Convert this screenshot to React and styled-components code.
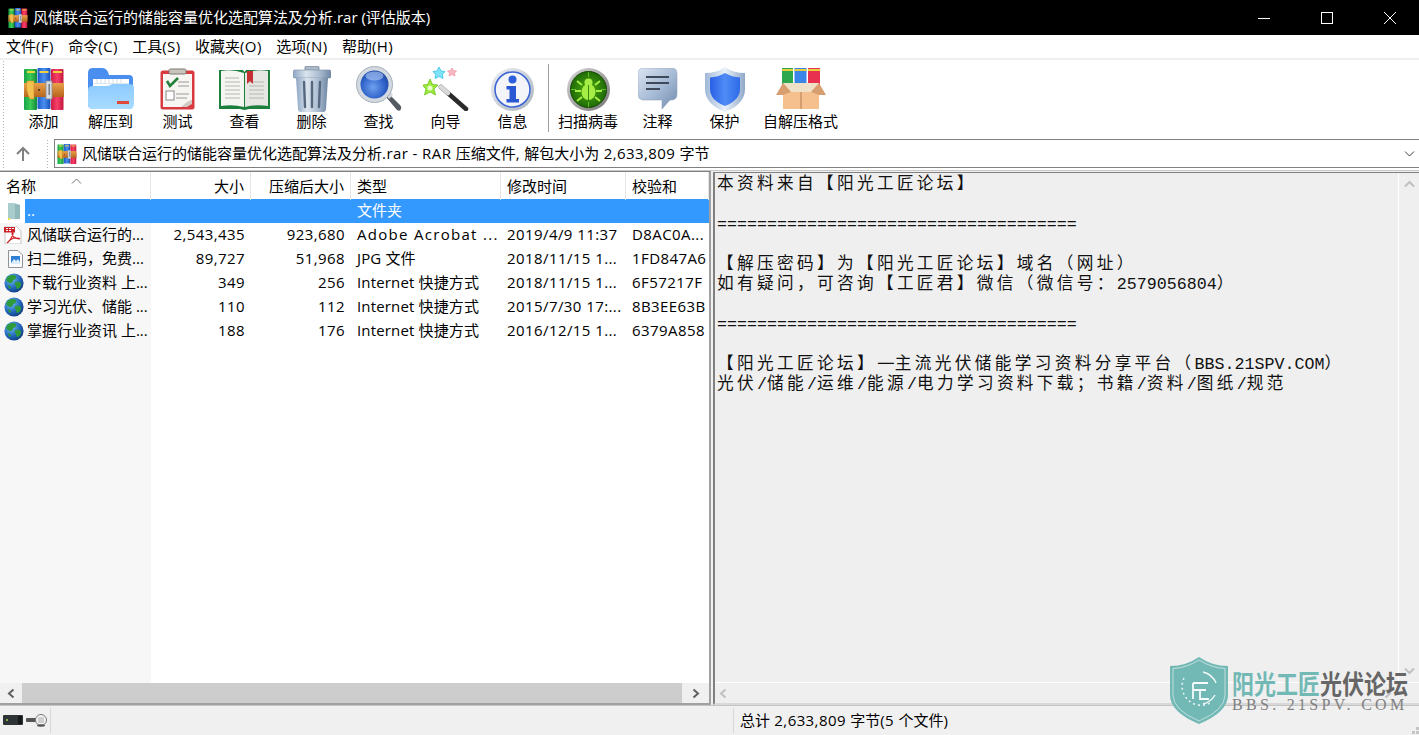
import React from "react";
import { styled, createGlobalStyle } from "styled-components";

const UI_FONT = `"Open Sans", "Noto Sans CJK SC", sans-serif`;

const Global = createGlobalStyle`
  html, body { margin: 0; padding: 0; background: #fff; overflow: hidden; }
  * { box-sizing: border-box; }
`;

/* ---------- icons ---------- */

const RarIcon = ({ w = 40, h = 42 }) => (
  <svg width={w} height={h} viewBox="0 0 40 42">
    <defs>
      <linearGradient id="rg" x1="0" x2="1"><stop offset="0" stopColor="#17a34a" /><stop offset=".5" stopColor="#3ccb55" /><stop offset="1" stopColor="#128a3c" /></linearGradient>
      <linearGradient id="rb" x1="0" x2="1"><stop offset="0" stopColor="#1c59c9" /><stop offset=".5" stopColor="#4a90ef" /><stop offset="1" stopColor="#1a4eb8" /></linearGradient>
      <linearGradient id="rr" x1="0" x2="1"><stop offset="0" stopColor="#d11a45" /><stop offset=".5" stopColor="#f6416a" /><stop offset="1" stopColor="#c2163c" /></linearGradient>
      <linearGradient id="ro" x1="0" x2="0" y1="0" y2="1"><stop offset="0" stopColor="#e9a04a" /><stop offset="1" stopColor="#b8661c" /></linearGradient>
    </defs>
    <rect x="0" y="1" width="13" height="41" rx="1" fill="url(#rg)" />
    <rect x="13.5" y="0" width="13" height="41" rx="1" fill="url(#rb)" />
    <rect x="27" y="1" width="12.5" height="41" rx="1" fill="url(#rr)" />
    <rect x="3" y="3" width="8" height="2" fill="#e8d83c" />
    <rect x="15.5" y="3" width="9" height="2" fill="#f0d040" />
    <rect x="29" y="3" width="9" height="2" fill="#f0d040" />
    <rect x="0" y="15" width="40" height="14" fill="url(#ro)" />
    <path d="M3 13 h7 v18 h-4 q-5 -9 -3 -18z" fill="#f2c14e" stroke="#c98a28" strokeWidth=".6" />
    <rect x="22" y="13" width="6" height="18" fill="#d8dce2" stroke="#8b8f96" strokeWidth=".8" />
    <rect x="24.5" y="16" width="1.4" height="11" fill="#6e7278" />
    <circle cx="15" cy="22" r="1" fill="#3a2a10" />
  </svg>
);

const FolderIcon = () => (
  <svg width="46" height="42" viewBox="0 0 46 42">
    <defs>
      <linearGradient id="fb" x1="0" x2="0" y1="0" y2="1"><stop offset="0" stopColor="#8ccaff" /><stop offset="1" stopColor="#a8dcff" /></linearGradient>
    </defs>
    <path d="M2 40 Q0 39 0 36 V5 Q0 0 5 0 H14 Q18 0 20 4 L21 7 H41 Q45 7 45 11 V36 Q45 41 41 41 H5z" fill="#4a8fef" />
    <rect x="5" y="11" width="36" height="14" fill="#fff" />
    <path d="M9 11v4M13 11v4M17 11v4M21 11v4M25 11v4M29 11v4M33 11v4" stroke="#c9d6e4" strokeWidth=".8" />
    <rect x="5" y="15" width="36" height="1" fill="#dfe7ee" />
    <path d="M0 36 V22 Q0 18 5 18 H18 Q22 18 24 16 H41 Q46 16 46 20 V36 Q46 41 41 41 H5 Q0 41 0 36z" fill="url(#fb)" />
    <rect x="29" y="33" width="12" height="3" fill="#e0483a" />
  </svg>
);

const ClipboardIcon = () => (
  <svg width="36" height="42" viewBox="0 0 36 42">
    <rect x=".5" y="2.5" width="34" height="39" rx="2.5" fill="#d83a3f" />
    <path d="M3 6 H32 V32 Q26 35 22 39 H3z" fill="#f7f5f2" />
    <path d="M22 39 Q25 34 32 32 V36 L27 39z" fill="#cfcac4" />
    <rect x="9" y="1" width="17" height="5" rx="1.5" fill="#c9c4bd" stroke="#7d7872" strokeWidth="1" />
    <path d="M7 13 L10 18 L18 10" fill="none" stroke="#23803a" strokeWidth="2.6" />
    <path d="M18 14h11M18 18h11M16 26h13M16 30h11" stroke="#9a9a9a" strokeWidth="1" />
    <rect x="6" y="23" width="8" height="9" fill="#fff" stroke="#8a8a8a" strokeWidth="1" />
  </svg>
);

const BookIcon = () => (
  <svg width="51" height="42" viewBox="0 0 51 42">
    <path d="M0 2 H24 L25.5 4 L27 2 H51 V41 H30 L25.5 42 L21 41 H0z" fill="#1d7f3c" />
    <path d="M2 3 Q14 1 25 5 V39 Q14 36 2 38z" fill="#f5f5f2" />
    <path d="M49 3 Q37 1 26 5 V39 Q37 36 49 38z" fill="#e6e6e3" />
    <path d="M6 10 H20M6 14 H21M6 18 H21M6 22 H21M6 26 H21M6 30 H21M30 14 H45M30 18 H45M30 22 H45M30 26 H45M30 30 H45" stroke="#b5b5b2" strokeWidth="1.2" />
    <path d="M28 3 H34 V16 L31 13 L28 16z" fill="#c53034" />
  </svg>
);

const TrashIcon = () => (
  <svg width="38" height="46" viewBox="0 0 38 46">
    <defs>
      <linearGradient id="tb" x1="0" x2="1"><stop offset="0" stopColor="#8ea6c4" /><stop offset=".35" stopColor="#dbe4ee" /><stop offset=".7" stopColor="#a9bbd0" /><stop offset="1" stopColor="#6f86a3" /></linearGradient>
    </defs>
    <rect x="12" y="0" width="14" height="5" rx="1.5" fill="#aab8c8" stroke="#6f7f92" strokeWidth=".8" />
    <rect x="0" y="4" width="38" height="8" rx="1.5" fill="url(#tb)" stroke="#7d8da0" strokeWidth=".6" />
    <path d="M3 12 H35 L33 43 Q33 46 30 46 H8 Q5 46 5 43z" fill="url(#tb)" />
    <path d="M11 16 L12 41 M19 16 V41 M27 16 L26 41" stroke="#56687e" strokeWidth="2.4" strokeLinecap="round" />
  </svg>
);

const SearchIcon = () => (
  <svg width="46" height="46" viewBox="0 0 46 46">
    <defs>
      <radialGradient id="sl" cx=".45" cy=".6" r=".7"><stop offset="0" stopColor="#6ea0ef" /><stop offset=".6" stopColor="#2f62c8" /><stop offset="1" stopColor="#183c94" /></radialGradient>
    </defs>
    <path d="M30 31 L41 44 Q44 46 45 43 Q46 41 44 39 L33 28z" fill="#555b62" />
    <path d="M31 30 L35 26 L37 29 L33 33z" fill="#d7dade" />
    <circle cx="18.5" cy="18.5" r="18" fill="#d3d9e0" stroke="#a7afb9" strokeWidth="1" />
    <circle cx="18.5" cy="18.5" r="14" fill="url(#sl)" />
    <ellipse cx="18.5" cy="10" rx="9" ry="4.5" fill="#a9c5f3" opacity=".65" />
  </svg>
);

const WandIcon = () => (
  <svg width="46" height="44" viewBox="0 0 46 44">
    <path d="M18 20 L43 42" stroke="#2b2b2b" strokeWidth="4.5" strokeLinecap="round" />
    <path d="M18 20 L25 26" stroke="#d8d8d8" strokeWidth="4.5" strokeLinecap="round" />
    <path d="M7 12 L9.5 17.5 L15 18 L11 22 L12.5 28 L7 25 L1.5 28 L3 22 L-1 18 L4.5 17.5z" fill="#9be83a" stroke="#6cc41e" strokeWidth=".8" />
    <circle cx="7" cy="21" r="2.6" fill="#e6ffc9" />
    <path d="M16 0 L18 4 L22 4.5 L19.5 7.5 L20 11.5 L16 9.5 L12 11.5 L12.5 7.5 L10 4.5 L14 4z" fill="#7fe3f7" stroke="#38c1e8" strokeWidth=".8" />
    <path d="M29 1 L30.5 3.5 L33.5 4 L31.5 6 L32 9 L29 7.5 L26 9 L26.5 6 L24.5 4 L27.5 3.5z" fill="#f7b5c0" stroke="#ee8a9c" strokeWidth=".6" />
  </svg>
);

const InfoIcon = () => (
  <svg width="43" height="43" viewBox="0 0 43 43">
    <defs>
      <linearGradient id="ir" x1="0" y1="0" x2="1" y2="1"><stop offset="0" stopColor="#eef1f5" /><stop offset="1" stopColor="#a9b2bd" /></linearGradient>
    </defs>
    <circle cx="21.5" cy="21.5" r="21.5" fill="url(#ir)" />
    <circle cx="21.5" cy="21.5" r="17.5" fill="#f3f5f8" stroke="#3f66d6" strokeWidth="1.6" />
    <circle cx="21.5" cy="11.5" r="4" fill="#2f60dc" />
    <path d="M15.5 18 H25 V31 H28 V34.5 H15.5 V31 H18.5 V21.5 H15.5z" fill="#2a58d2" />
  </svg>
);

const BugIcon = () => (
  <svg width="43" height="43" viewBox="0 0 43 43">
    <defs>
      <linearGradient id="bg" x1="0" y1="0" x2="1" y2="1"><stop offset="0" stopColor="#d8d8d8" /><stop offset="1" stopColor="#747474" /></linearGradient>
      <radialGradient id="bd"><stop offset="0" stopColor="#4fae10" /><stop offset="1" stopColor="#1f6a06" /></radialGradient>
    </defs>
    <circle cx="21.5" cy="21.5" r="21.5" fill="url(#bg)" />
    <circle cx="21.5" cy="21.5" r="18" fill="url(#bd)" stroke="#174c05" strokeWidth="1" />
    <path d="M21.5 4v5M21.5 34v5M4 21.5h5M34 21.5h5" stroke="#5fc020" strokeWidth="1" />
    <circle cx="21.5" cy="14.5" r="4" fill="#a6ee45" />
    <ellipse cx="21.5" cy="24" rx="7" ry="8" fill="#a6ee45" />
    <path d="M21.5 17v15" stroke="#3a8a0a" strokeWidth="1" />
    <path d="M15 17 L10 13 M28 17 L33 13 M14 23 H8 M29 23 H35 M15 29 L10 33 M28 29 L33 33" stroke="#a6ee45" strokeWidth="2" />
  </svg>
);

const CommentIcon = () => (
  <svg width="40" height="42" viewBox="0 0 40 42">
    <defs>
      <linearGradient id="cb" x1="0" y1="0" x2="1" y2="1"><stop offset="0" stopColor="#dbe5f1" /><stop offset=".55" stopColor="#a3b8d3" /><stop offset="1" stopColor="#7189ac" /></linearGradient>
    </defs>
    <path d="M6 0 H34 Q39 0 39 6 V26 Q39 32 33 32 H32 L24 41 L24 32 H6 Q0 32 0 26 V6 Q0 0 6 0z" fill="url(#cb)" stroke="#93a5bc" strokeWidth=".6" />
    <path d="M8 9 H31M8 15 H31M8 21 H22" stroke="#3e4a5c" strokeWidth="1.8" />
  </svg>
);

const ShieldIcon = () => (
  <svg width="40" height="45" viewBox="0 0 40 45">
    <defs>
      <linearGradient id="sh" x1="0" x2="1"><stop offset="0" stopColor="#2a5fe6" /><stop offset=".5" stopColor="#4f8cf7" /><stop offset="1" stopColor="#2f6ae8" /></linearGradient>
      <linearGradient id="sr" x1="0" x2="1"><stop offset="0" stopColor="#9fb8d8" /><stop offset=".5" stopColor="#eaf1f8" /><stop offset="1" stopColor="#8fa8c8" /></linearGradient>
    </defs>
    <path d="M20 0 Q28 6 40 6 V22 Q40 37 20 45 Q0 37 0 22 V6 Q12 6 20 0z" fill="url(#sr)" />
    <path d="M20 6 Q27 10 35 10.5 V22 Q35 33 20 39 Q5 33 5 22 V10.5 Q13 10 20 6z" fill="url(#sh)" />
  </svg>
);

const BoxIcon = () => (
  <svg width="52" height="42" viewBox="0 0 52 42">
    <rect x="7" y="0" width="11" height="20" fill="#2ea84e" />
    <rect x="19.5" y="0" width="12" height="20" fill="#3a86e8" />
    <rect x="33" y="0" width="12" height="20" fill="#e8304f" />
    <path d="M7 2h11M19.5 2h12M33 2h12" stroke="#e8cf3c" strokeWidth="2" />
    <path d="M8 15 H44 V41 H8z" fill="#f6c08e" />
    <path d="M8 15 H44 L36 24 H16z" fill="#efe1c8" />
    <path d="M26 24 V41" stroke="#b57d52" strokeWidth="1" />
    <path d="M1 27 L8 15 L16 24 L8 27z M51 27 L44 15 L36 24 L44 27z" fill="#d89e70" />
  </svg>
);

const PdfIcon = () => (
  <svg width="18" height="18" viewBox="0 0 18 18">
    <path d="M1 0 H12 L17 5 V18 H1z" fill="#fff" stroke="#b9b9b9" strokeWidth=".8" />
    <rect x="0" y="1" width="11" height="5.5" fill="#c8242a" />
    <path d="M2 2.5h2M5 2.5h2M8 2.5h2M2 4.5h2M5 4.5h2" stroke="#fff" strokeWidth="1" />
    <path d="M3 17 Q7 14 9 8 Q9 5 8 7 Q8 12 15 13 Q17 12 12 12 Q7 12 3 17z" fill="none" stroke="#d0252b" strokeWidth="1.2" />
  </svg>
);

const JpgIcon = () => (
  <svg width="15" height="18" viewBox="0 0 15 18">
    <path d="M.5 .5 H10 L14.5 5 V17.5 H.5z" fill="#fbfbfb" stroke="#8f949a" />
    <rect x="3" y="6" width="9" height="8" fill="#2e7fd3" />
    <path d="M3 13 L6 9 L8 11 L10 9 L12 12 V14 H3z" fill="#dcecfa" />
  </svg>
);

const GlobeIcon = () => (
  <svg width="20" height="20" viewBox="0 0 20 20">
    <defs>
      <radialGradient id="gl" cx=".35" cy=".3" r=".85"><stop offset="0" stopColor="#6ec0f2" /><stop offset=".6" stopColor="#1d5fb4" /><stop offset="1" stopColor="#0c2e6a" /></radialGradient>
    </defs>
    <circle cx="10" cy="10" r="9.6" fill="url(#gl)" />
    <path d="M5 3 Q9 1 12 3 Q13 6 9 7 Q9 10 6 10 Q3 9 2 7 Q3 4 5 3z M11 9 Q15 8 17 10 Q18 13 14 16 Q12 16 12 13 Q10 11 11 9z M4 12 Q7 13 7 15 L6 16 Q4 15 4 12z" fill="#2f9a3a" />
  </svg>
);

const ParentIcon = () => (
  <svg width="13" height="17" viewBox="0 0 13 17">
    <path d="M0 0 H6 L12 2 V16 H0z" fill="#a9cccd" />
    <path d="M7 1 L12 2 V16 H7z" fill="#8fb9bb" />
    <rect x="0" y="15" width="2" height="2" fill="#e6e24c" />
  </svg>
);

const KeyIcon = () => (
  <svg width="21" height="14" viewBox="0 0 21 14">
    <rect x="0" y="5" width="11" height="4" rx="1" fill="#555" />
    <circle cx="15" cy="7" r="5.5" fill="#f4f4f4" stroke="#777" />
    <path d="M12 5h6M12 7h6M12 9h6" stroke="#999" strokeWidth=".8" />
    <ellipse cx="15" cy="12.5" rx="4" ry="1.2" fill="#555" />
  </svg>
);

const LockPill = () => (
  <svg width="20" height="10" viewBox="0 0 20 10">
    <rect width="20" height="10" rx="1" fill="#2e3436" />
    <rect x="15" y="1" width="4" height="8" fill="#16191a" />
    <circle cx="4" cy="5" r="1" fill="#8fd84a" />
  </svg>
);

const GripIcon = () => (
  <svg width="11" height="11" viewBox="0 0 11 11">
    <path d="M8 0h3v3h-3z M4 4h3v3h-3z M8 4h3v3h-3z M0 8h3v3h-3z M4 8h3v3h-3z M8 8h3v3h-3z" fill="#c4c4c4" />
  </svg>
);

const Chevron = ({ dir = "left", color = "#606060", size = 11, stroke = 2 }) => {
  const paths = {
    left: "M7.5 1.5 L3 5.5 L7.5 9.5",
    right: "M3.5 1.5 L8 5.5 L3.5 9.5",
    up: "M1 7.5 L5.5 3 L10 7.5",
    down: "M1 3.5 L5.5 8 L10 3.5",
  };
  return (
    <svg width={size} height={size} viewBox="0 0 11 11">
      <path d={paths[dir]} fill="none" stroke={color} strokeWidth={stroke} />
    </svg>
  );
};

const ShieldLogo = () => (
  <svg width="58" height="67" viewBox="0 0 58 67">
    <path d="M29 0 Q42 9 58 9 V38 Q58 55 29 67 Q0 55 0 38 V9 Q16 9 29 0z" fill="#72b9b6" />
    <path d="M29 3 Q42 11 55 11.500 V38 Q55 53 29 64 Q3 53 3 38 V11.500 Q16 11 29 3z" fill="none" stroke="#d4e8e6" strokeWidth=".8" />
    <path d="M14 21 A19 19 0 0 0 40 46" fill="none" stroke="#e6f3f2" strokeWidth="1.6" strokeDasharray="2 3" />
    <path d="M33 15 A19 19 0 0 1 46 26 M45 38 A19 19 0 0 1 33 47" fill="none" stroke="#f2f9f8" strokeWidth="1.4" />
    <path d="M23 26 H38 M23 26 V42 M23 33 H36 M30 33 V42 H39" fill="none" stroke="#f6fbfb" strokeWidth="1.8" />
  </svg>
);

/* ---------- window chrome ---------- */

const Window = styled.div`
  position: relative;
  width: 1419px;
  height: 735px;
  display: flex;
  flex-direction: column;
  overflow: hidden;
  background: #fff;
  font-family: ${UI_FONT};
  font-size: 15px;
  color: #000;
`;

const TitleBar = styled.div`
  height: 35px;
  flex: none;
  background: #000;
  color: #fff;
  display: flex;
  align-items: center;
  padding-left: 8px;
  gap: 5px;
`;

const TitleText = styled.div`
  flex: 1;
  line-height: 35px;
  white-space: nowrap;
`;

const WindowButton = styled.div`
  width: 58px;
  height: 35px;
  display: flex;
  align-items: center;
  justify-content: center;
`;

const MenuBar = styled.div`
  height: 25px;
  flex: none;
  display: flex;
  gap: 14.4px;
  padding: 0 0 2px 6px;
  align-items: center;
  border-bottom: 2px solid #f0f0f0;
  white-space: nowrap;
`;

const Toolbar = styled.div`
  height: 79px;
  flex: none;
  display: flex;
  padding-left: 10px;
  background-image: radial-gradient(circle, #b5b5b5 .8px, transparent 1px);
  background-size: 3px 3px;
  background-repeat: repeat-y;
  background-position: 2px 0;
`;

const ToolButton = styled.div`
  width: ${(p) => p.$w}px;
  flex: none;
  display: flex;
  flex-direction: column;
  align-items: center;
  white-space: nowrap;
`;

const ToolIcon = styled.div`
  height: 50px;
  margin-top: 4px;
  display: flex;
  align-items: center;
  justify-content: center;
`;

const ToolLabel = styled.div`
  line-height: 20px;
  margin-top: -3px;
`;

const ToolDivider = styled.div`
  width: 1px;
  height: 68px;
  margin: 4px 3px 0 2px;
  background: #a0a0a0;
  flex: none;
`;

const AddressRow = styled.div`
  height: 29px;
  flex: none;
  display: flex;
  align-items: stretch;
  background-image: radial-gradient(circle, #b5b5b5 .8px, transparent 1px), radial-gradient(circle, #b5b5b5 .8px, transparent 1px);
  background-size: 3px 3px, 3px 3px;
  background-repeat: repeat-y, repeat-y;
  background-position: 2px 0, 46px 0;
`;

const UpButton = styled.div`
  width: 54px;
  flex: none;
  padding-left: 15px;
  display: flex;
  align-items: center;
`;

const AddressBox = styled.div`
  flex: 1;
  border: 1px solid #808080;
  border-right: none;
  display: flex;
  align-items: center;
  padding: 0 4px 0 2px;
  gap: 5px;
  white-space: nowrap;
`;

const AddressText = styled.div`
  flex: 1;
  line-height: 20px;
  padding-bottom: 2px;
`;

const Panes = styled.div`
  flex: 1;
  min-height: 0;
  display: flex;
  margin-top: 2px;
  background: #f0f0f0;
  border-top: 1px solid #c8c8c8;
`;

/* ---------- file list ---------- */

const ListPane = styled.div`
  width: 711px;
  flex: none;
  display: flex;
  flex-direction: column;
  background: #fff;
  border-top: 1px solid #808080;
  border-right: 2px solid #a0a0a0;
  border-bottom: 2px solid #a0a0a0;
`;

const COLUMNS = "151px 100px 100px 150px 125px 1fr";

const HeaderRow = styled.div`
  position: relative;
  display: grid;
  grid-template-columns: ${COLUMNS};
  height: 27px;
  flex: none;
  background: #fff;
`;

const HeaderCell = styled.div`
  padding: 0 6px;
  line-height: 28px;
  text-align: ${(p) => (p.$right ? "right" : "left")};
  border-right: 1px solid #e5e5e5;
  white-space: nowrap;
`;

const SortCaret = styled.div`
  position: absolute;
  left: 71px;
  top: -1px;
`;

const ListBody = styled.div`
  flex: 1;
  min-height: 0;
  background: linear-gradient(90deg, #f7f7f7 151px, #fff 151px);
`;

const Row = styled.div`
  display: grid;
  grid-template-columns: ${COLUMNS};
  height: 24px;
  align-items: center;
  white-space: nowrap;
  color: ${(p) => (p.$selected ? "#fff" : "#000")};
`;

const NameCell = styled.div`
  display: flex;
  align-items: center;
  height: 24px;
`;

const IconSlot = styled.div`
  width: 25px;
  height: 24px;
  flex: none;
  padding-left: ${(p) => p.$pad}px;
  display: flex;
  align-items: center;
  background: ${(p) => (p.$selected ? "#fff" : "transparent")};
`;

const NameText = styled.div`
  flex: 1;
  height: 24px;
  line-height: 23px;
  padding-left: 2px;
  overflow: hidden;
  background: ${(p) => (p.$selected ? "#3399ff" : "transparent")};
`;

const Cell = styled.div`
  height: 24px;
  line-height: 23px;
  padding: 0 6px;
  overflow: hidden;
  letter-spacing: ${(p) => p.$track || 0}px;
  text-align: ${(p) => (p.$right ? "right" : "left")};
  background: ${(p) => (p.$selected ? "#3399ff" : "transparent")};
`;

const Latin = styled.span`
  letter-spacing: 0.42px;
`;

const HScroll = styled.div`
  height: 20px;
  flex: none;
  display: flex;
  background: #f0f0f0;
`;

const ScrollButton = styled.div`
  width: ${(p) => p.$w}px;
  flex: none;
  display: flex;
  align-items: center;
  justify-content: center;
`;

const ScrollThumb = styled.div`
  flex: 1;
  background: #cdcdcd;
`;

/* ---------- comment ---------- */

const CommentPane = styled.div`
  flex: 1;
  min-width: 0;
  margin: 1px 0 0 2px;
  display: flex;
  flex-direction: column;
  background: #efefef;
  border-top: 1px solid #808080;
  border-left: 2px solid #808080;
  border-bottom: 2px solid #d8d8d8;
`;

const CommentMain = styled.div`
  flex: 1;
  min-height: 0;
  display: flex;
  border-bottom: 1px solid #fff;
`;

const CommentText = styled.div`
  flex: 1;
  padding: 2px 0 0 2px;
  font-family: "Liberation Mono", "Noto Sans CJK SC", monospace;
  font-size: 16.67px;
  letter-spacing: 3.33px;
  color: #111;
  overflow: hidden;
`;

const CommentLine = styled.div`
  height: 20px;
  line-height: 20px;
  white-space: pre;
`;

const MonoRun = styled.span`
  letter-spacing: 0;
`;

const WideDash = styled.span`
  font-family: "Noto Sans CJK SC", sans-serif;
  font-size: 20px;
  line-height: 0;
  letter-spacing: 0;
`;

const VScroll = styled.div`
  width: 21px;
  flex: none;
  border-left: 1px solid #fff;
  padding: 6px 0;
  display: flex;
  flex-direction: column;
  justify-content: space-between;
  align-items: center;
`;

const CommentHScroll = styled.div`
  height: 20px;
  flex: none;
  padding: 0 26px 0 3px;
  display: flex;
  align-items: center;
  justify-content: space-between;
`;

/* ---------- status ---------- */

const StatusBar = styled.div`
  height: 30px;
  flex: none;
  display: flex;
  align-items: center;
  background: #f0f0f0;
  border-top: 1px solid #c4c4c4;
`;

const StatusIcons = styled.div`
  width: 51px;
  height: 25px;
  flex: none;
  display: flex;
  align-items: center;
  gap: 3px;
  padding: 0 0 2px 3px;
  border-right: 1px solid #d8d8d8;
`;

const StatusSpacer = styled.div`
  width: 682px;
  flex: none;
`;

const StatusText = styled.div`
  flex: 1;
  height: 25px;
  line-height: 25px;
  padding-left: 6px;
  border-left: 1px solid #d8d8d8;
  white-space: nowrap;
`;

const StatusGrip = styled.div`
  align-self: flex-end;
  height: 13px;
  width: 11px;
  flex: none;
`;

/* ---------- watermark ---------- */

const Watermark = styled.div`
  position: absolute;
  left: 1170px;
  top: 657px;
  display: flex;
  gap: 4px;
  align-items: flex-start;
`;

const MarkWords = styled.div`
  display: flex;
  flex-direction: column;
  width: 178px;
`;

const MarkTitle = styled.div`
  display: flex;
  font-size: 22px;
  font-weight: 700;
  line-height: 26px;
  margin-top: 12px;
  transform: scaleY(1.2);
  font-family: "Noto Sans CJK SC", sans-serif;
  white-space: nowrap;
`;

const MarkPart = styled.span`
  color: ${(p) => p.$color};
`;

const MarkUrl = styled.div`
  font-family: "Liberation Serif", serif;
  font-size: 16px;
  line-height: 14px;
  margin-top: 3px;
  letter-spacing: 3.3px;
  color: #808080;
  white-space: nowrap;
`;

/* ---------- data ---------- */

const TOOLS_LEFT = [
  ["添加", <RarIcon />],
  ["解压到", <FolderIcon />],
  ["测试", <ClipboardIcon />],
  ["查看", <BookIcon />],
  ["删除", <TrashIcon />],
  ["查找", <SearchIcon />],
  ["向导", <WandIcon />],
  ["信息", <InfoIcon />],
];

const TOOLS_RIGHT = [
  ["扫描病毒", <BugIcon />, 72],
  ["注释", <CommentIcon />, 67],
  ["保护", <ShieldIcon />, 67],
  ["自解压格式", <BoxIcon />, 85],
];

const MENUS = ["文件(F)", "命令(C)", "工具(S)", "收藏夹(O)", "选项(N)", "帮助(H)"];

const FILES = [
  { icon: <PdfIcon />, pad: 4, name: "风储联合运行的...", size: "2,543,435", packed: "923,680", type: "Adobe Acrobat ...", track: 1.3, date: "2019/4/9 11:37", crc: "D8AC0A..." },
  { icon: <JpgIcon />, pad: 8, name: "扫二维码，免费...", size: "89,727", packed: "51,968", type: "JPG 文件", track: 0.15, date: "2018/11/15 1...", crc: "1FD847A6" },
  { icon: <GlobeIcon />, pad: 4, name: "下载行业资料 上...", size: "349", packed: "256", type: "Internet 快捷方式", track: 0.15, date: "2018/11/15 1...", crc: "6F57217F" },
  { icon: <GlobeIcon />, pad: 4, name: "学习光伏、储能 ...", size: "110", packed: "112", type: "Internet 快捷方式", track: 0.15, date: "2015/7/30 17:...", crc: "8B3EE63B" },
  { icon: <GlobeIcon />, pad: 4, name: "掌握行业资讯 上...", size: "188", packed: "176", type: "Internet 快捷方式", track: 0.15, date: "2016/12/15 1...", crc: "6379A858" },
];

const RULE = "=".repeat(36);

const COMMENT_LINES = [
  "本资料来自【阳光工匠论坛】",
  "",
  RULE,
  "",
  "【解压密码】为【阳光工匠论坛】域名（网址）",
  "如有疑问，可咨询【工匠君】微信（微信号：2579056804）",
  "",
  RULE,
  "",
  "【阳光工匠论坛】—主流光伏储能学习资料分享平台（BBS.21SPV.COM）",
  "光伏/储能/运维/能源/电力学习资料下载；书籍/资料/图纸/规范",
];

// latin runs in the UI font are a touch narrower than the original's, so they get some tracking
const Txt = ({ children }) =>
  children.split(/([\x20-\x7e]+)/).map((part, i) => (i % 2 ? <Latin key={i}>{part}</Latin> : part));

const renderLine = (text) =>
  text.split(/([\x20-\x7e]+|—)/).map((part, i) => {
    if (i % 2 === 0) return part;
    return part === "—" ? <WideDash key={i}>—</WideDash> : <MonoRun key={i}>{part}</MonoRun>;
  });

export default function App() {
  return (
    <Window>
      <Global />
      <TitleBar>
        <RarIcon w={20} h={20} />
        <TitleText>风储联合运行的储能容量优化选配算法及分析.rar (评估版本)</TitleText>
        <WindowButton>
          <svg width="14" height="14" viewBox="0 0 14 14"><path d="M1 7.5 H13" stroke="#fff" strokeWidth="1" /></svg>
        </WindowButton>
        <WindowButton>
          <svg width="14" height="14" viewBox="0 0 14 14"><rect x="1.500" y="1.500" width="11" height="11" fill="none" stroke="#fff" /></svg>
        </WindowButton>
        <WindowButton>
          <svg width="14" height="14" viewBox="0 0 14 14"><path d="M1 1 L13 13 M13 1 L1 13" stroke="#fff" strokeWidth="1" /></svg>
        </WindowButton>
      </TitleBar>

      <MenuBar>
        {MENUS.map((m) => (
          <span key={m}><Txt>{m}</Txt></span>
        ))}
      </MenuBar>

      <Toolbar>
        {TOOLS_LEFT.map(([label, icon]) => (
          <ToolButton key={label} $w={67}>
            <ToolIcon>{icon}</ToolIcon>
            <ToolLabel>{label}</ToolLabel>
          </ToolButton>
        ))}
        <ToolDivider />
        {TOOLS_RIGHT.map(([label, icon, w]) => (
          <ToolButton key={label} $w={w}>
            <ToolIcon>{icon}</ToolIcon>
            <ToolLabel>{label}</ToolLabel>
          </ToolButton>
        ))}
      </Toolbar>

      <AddressRow>
        <UpButton>
          <svg width="16" height="16" viewBox="0 0 16 16">
            <path d="M8 15 V2 M2 8 L8 2 L14 8" fill="none" stroke="#808080" strokeWidth="2" />
          </svg>
        </UpButton>
        <AddressBox>
          <RarIcon w={20} h={20} />
          <AddressText><Txt>风储联合运行的储能容量优化选配算法及分析.rar - RAR 压缩文件, 解包大小为 2,633,809 字节</Txt></AddressText>
          <Chevron dir="down" color="#404040" size={11} stroke={1} />
        </AddressBox>
      </AddressRow>

      <Panes>
        <ListPane>
          <HeaderRow>
            <SortCaret>
              <Chevron dir="up" color="#707070" size={11} stroke={1} />
            </SortCaret>
            <HeaderCell>名称</HeaderCell>
            <HeaderCell $right>大小</HeaderCell>
            <HeaderCell $right>压缩后大小</HeaderCell>
            <HeaderCell>类型</HeaderCell>
            <HeaderCell>修改时间</HeaderCell>
            <HeaderCell>校验和</HeaderCell>
          </HeaderRow>
          <ListBody>
            <Row $selected>
              <NameCell>
                <IconSlot $pad={8} $selected><ParentIcon /></IconSlot>
                <NameText $selected>..</NameText>
              </NameCell>
              <Cell $selected />
              <Cell $selected />
              <Cell $selected>文件夹</Cell>
              <Cell $selected />
              <Cell $selected />
            </Row>
            {FILES.map((f) => (
              <Row key={f.crc}>
                <NameCell>
                  <IconSlot $pad={f.pad}>{f.icon}</IconSlot>
                  <NameText>{f.name}</NameText>
                </NameCell>
                <Cell $right><Txt>{f.size}</Txt></Cell>
                <Cell $right><Txt>{f.packed}</Txt></Cell>
                <Cell $track={f.track}>{f.type}</Cell>
                <Cell><Txt>{f.date}</Txt></Cell>
                <Cell><Txt>{f.crc}</Txt></Cell>
              </Row>
            ))}
          </ListBody>
          <HScroll>
            <ScrollButton $w={22}><Chevron dir="left" /></ScrollButton>
            <ScrollThumb />
            <ScrollButton $w={27}><Chevron dir="right" /></ScrollButton>
          </HScroll>
        </ListPane>

        <CommentPane>
          <CommentMain>
            <CommentText>
              {COMMENT_LINES.map((line, i) => (
                <CommentLine key={i}>{renderLine(line)}</CommentLine>
              ))}
            </CommentText>
            <VScroll>
              <Chevron dir="up" color="#c0c0c0" size={11} />
              <Chevron dir="down" color="#c0c0c0" size={11} />
            </VScroll>
          </CommentMain>
          <CommentHScroll>
            <Chevron dir="left" color="#c0c0c0" size={11} />
            <Chevron dir="right" color="#c0c0c0" size={11} />
          </CommentHScroll>
        </CommentPane>
      </Panes>

      <StatusBar>
        <StatusIcons>
          <LockPill />
          <KeyIcon />
        </StatusIcons>
        <StatusSpacer />
        <StatusText><Txt>总计 2,633,809 字节(5 个文件)</Txt></StatusText>
        <StatusGrip><GripIcon /></StatusGrip>
      </StatusBar>

      <Watermark>
        <ShieldLogo />
        <MarkWords>
          <MarkTitle>
            <MarkPart $color="#72b9b6">阳光工匠</MarkPart>
            <MarkPart $color="#666">光伏论坛</MarkPart>
          </MarkTitle>
          <MarkUrl>BBS. 21SPV. COM</MarkUrl>
        </MarkWords>
      </Watermark>
    </Window>
  );
}
